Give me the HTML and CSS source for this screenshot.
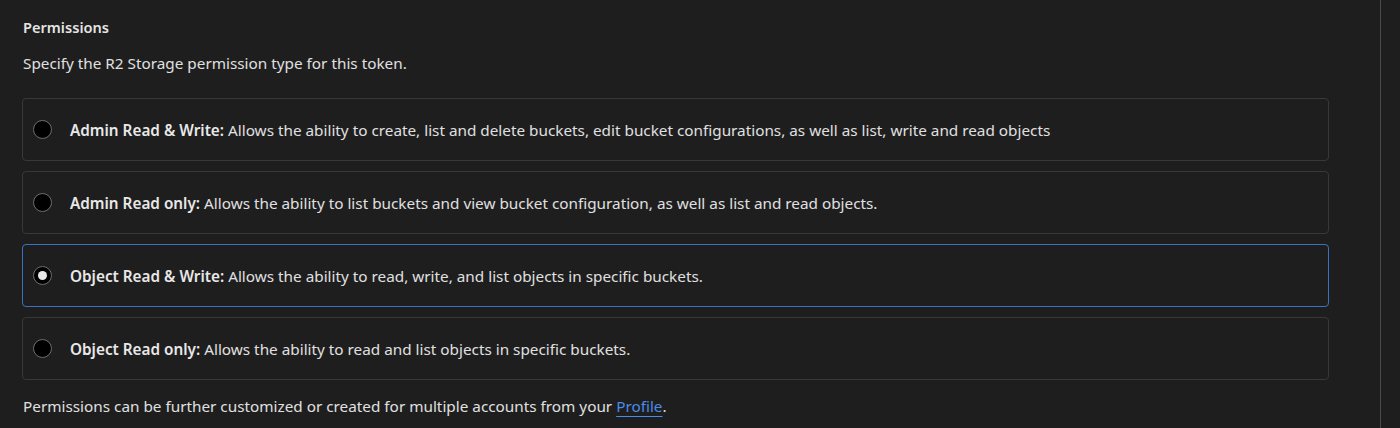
FILE: index.html
```html
<!DOCTYPE html>
<html>
<head>
<meta charset="utf-8">
<link rel="stylesheet" href="styles.css">
</head>
<body>
<div class="page">
  <main class="content">
    <h3 class="title">Permissions</h3>
    <p class="desc">Specify the R2 Storage permission type for this token.</p>
    <div class="options">
      <label class="option">
        <span class="radio"></span>
        <span class="text"><b>Admin Read &amp; Write:</b> Allows the ability to create, list and delete buckets, edit bucket configurations, as well as list, write and read objects</span>
      </label>
      <label class="option">
        <span class="radio"></span>
        <span class="text"><b>Admin Read only:</b> Allows the ability to list buckets and view bucket configuration, as well as list and read objects.</span>
      </label>
      <label class="option selected">
        <span class="radio checked"></span>
        <span class="text"><b>Object Read &amp; Write:</b> Allows the ability to read, write, and list objects in specific buckets.</span>
      </label>
      <label class="option">
        <span class="radio"></span>
        <span class="text"><b>Object Read only:</b> Allows the ability to read and list objects in specific buckets.</span>
      </label>
    </div>
    <p class="note">Permissions can be further customized or created for multiple accounts from your <a href="#" class="link">Profile</a>.</p>
  </main>
  <div class="rail"></div>
</div>
</body>
</html>
```
FILE: styles.css
```css
html, body {
  margin: 0;
  padding: 0;
  background: #1e1e1e;
  height: 100%;
}
body {
  font-family: "Noto Sans", "Open Sans", sans-serif;
  color: #e4e4e4;
  font-size: 15.3px;
}
.page {
  display: flex;
  height: 428px;
  overflow: hidden;
}
.content {
  width: 1307px;
  padding: 17px 0 0 22px;
  flex: none;
}
.rail {
  margin-left: 51px;
  width: 1px;
  background: #4a4a4a;
  flex: none;
}
.title {
  margin: 0 0 16px 1px;
  font-size: 14.6px;
  font-weight: 600;
  line-height: 20px;
}
.desc {
  margin: 0 0 25px 1px;
  line-height: 20px;
  color: #e0e0e0;
}
.options {
  display: flex;
  flex-direction: column;
  gap: 10px;
}
.option {
  display: flex;
  align-items: center;
  height: 61px;
  border: 1px solid #383838;
  border-radius: 4px;
  padding-left: 10px;
  box-sizing: content-box;
}
.option.selected {
  border-color: #3a71c1;
}
.radio {
  width: 17px;
  height: 17px;
  border: 1px solid #6e6e6e;
  border-radius: 50%;
  background: #000;
  flex: none;
  position: relative;
  margin-right: 18px;
}
.radio.checked::after {
  content: "";
  position: absolute;
  left: 4px;
  top: 4px;
  width: 9px;
  height: 9px;
  border-radius: 50%;
  background: #e8e8e8;
}
.text {
  line-height: 20px;
  color: #e0e0e0;
}
.text b {
  font-weight: 600;
  color: #e8e8e8;
}
.note {
  margin: 16px 0 0 1px;
  line-height: 20px;
  color: #e0e0e0;
}
.link {
  color: #4a8be8;
  text-decoration: underline;
  text-underline-offset: 4px;
}
```
